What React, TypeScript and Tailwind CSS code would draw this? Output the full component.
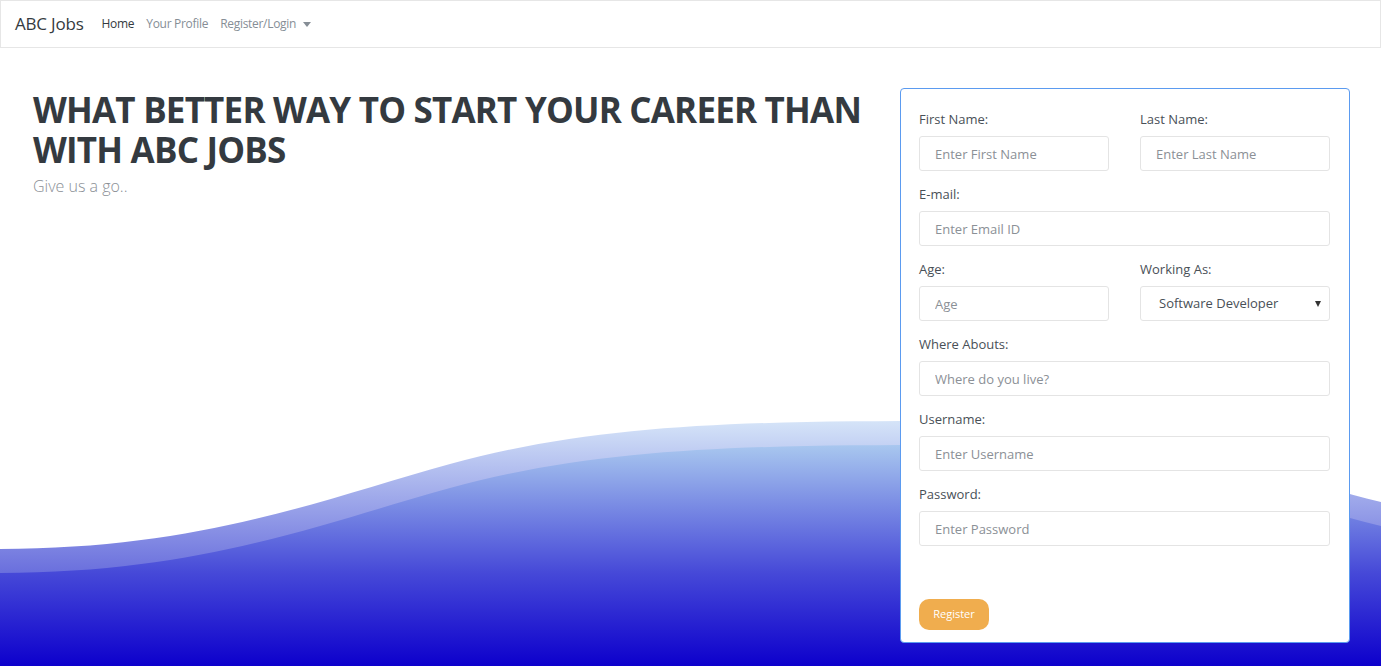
import React from "react";

const font = { fontFamily: '"Open Sans", "Noto Sans", sans-serif' };

function Field({ label, placeholder }: { label: string; placeholder: string }) {
  return (
    <div className="mb-[13px]">
      <label className="block h-[20px] leading-[20px] mb-[7px] text-[13px] text-[#495057]">{label}</label>
      <input
        placeholder={placeholder}
        className="w-full h-[35px] border border-[#e4e4e4] rounded-[3px] pl-[15px] text-[13px] text-[#495057] placeholder:text-[#8b9096] outline-none"
      />
    </div>
  );
}

function Wave() {
  return (
    <svg className="absolute inset-0 w-full h-full" viewBox="0 0 1381 618" preserveAspectRatio="none">
      <defs>
        <linearGradient id="w1" gradientUnits="userSpaceOnUse" x1="0" y1="373" x2="0" y2="618">
          <stop offset="0" stopColor="#d5e4f8" />
          <stop offset="0.62" stopColor="#6a6fdd" />
          <stop offset="1" stopColor="#2a20d0" />
        </linearGradient>
        <linearGradient id="w2" gradientUnits="userSpaceOnUse" x1="0" y1="396" x2="0" y2="618">
          <stop offset="0" stopColor="#a9c8ef" />
          <stop offset="0.58" stopColor="#4649d8" />
          <stop offset="1" stopColor="#0d00cc" />
        </linearGradient>
      </defs>
      <path
        fill="url(#w1)"
        d="M0,501 C200,501 320,452 450,416 C600,375 750,373 950,373 C1150,373 1250,422 1381,454 L1381,618 L0,618 Z"
      />
      <path
        fill="url(#w2)"
        d="M0,525 C200,525 320,476 450,440 C600,399 750,397 950,397 C1150,397 1250,446 1381,478 L1381,618 L0,618 Z"
      />
    </svg>
  );
}

export default function App() {
  return (
    <div className="h-[666px] w-full flex flex-col overflow-hidden bg-white" style={font}>
      <nav className="h-[48px] shrink-0 border border-[#e6e6e6] flex items-center pl-[14px]">
        <span className="text-[17px] tracking-[-0.2px] text-[#343a40] mr-[18px]">ABC Jobs</span>
        <div className="flex items-center gap-[12px] text-[12px] tracking-[-0.3px]">
          <a className="text-[#343a40]">Home</a>
          <a className="text-[#868e96]">Your Profile</a>
          <a className="text-[#868e96] flex items-center">
            Register/Login
            <span className="ml-[7px] w-0 h-0 border-x-[4px] border-x-transparent border-t-[5px] border-t-[#868e96]" />
          </a>
        </div>
      </nav>

      <main className="relative flex-1 flex">
        <Wave />
        <div className="relative flex-1 pl-[33px] pt-[42px]">
          <h1 className="max-w-[840px] text-[35px] leading-[40px] tracking-[-0.8px] font-bold text-[#343a40]">
            WHAT BETTER WAY TO START YOUR CAREER THAN WITH ABC JOBS
          </h1>
          <p className="mt-[4px] text-[16px] leading-[24px] font-light text-[#8a8f95]">Give us a go..</p>
        </div>

        <div className="relative shrink-0 w-[450px] h-[555px] mt-[40px] mr-[31px] bg-white border border-[#5b9bf0] rounded-[4px] pt-[20px] pl-[18px] pr-[19px]">
          <div className="grid grid-cols-2 gap-x-[31px]">
            <Field label="First Name:" placeholder="Enter First Name" />
            <Field label="Last Name:" placeholder="Enter Last Name" />
          </div>
          <Field label="E-mail:" placeholder="Enter Email ID" />
          <div className="grid grid-cols-2 gap-x-[31px]">
            <Field label="Age:" placeholder="Age" />
            <div className="mb-[13px]">
              <label className="block h-[20px] leading-[20px] mb-[7px] text-[13px] text-[#495057]">Working As:</label>
              <div className="h-[35px] border border-[#e4e4e4] rounded-[3px] pl-[18px] pr-[8px] flex items-center justify-between text-[13px] text-[#495057]">
                <span>Software Developer</span>
                <span className="w-0 h-0 border-x-[3px] border-x-transparent border-t-[6px] border-t-[#333]" />
              </div>
            </div>
          </div>
          <Field label="Where Abouts:" placeholder="Where do you live?" />
          <Field label="Username:" placeholder="Enter Username" />
          <Field label="Password:" placeholder="Enter Password" />
          <button className="mt-[40px] w-[70px] h-[31px] rounded-[10px] bg-[#f0ad4e] text-white text-[11px]">
            Register
          </button>
        </div>
      </main>
    </div>
  );
}
